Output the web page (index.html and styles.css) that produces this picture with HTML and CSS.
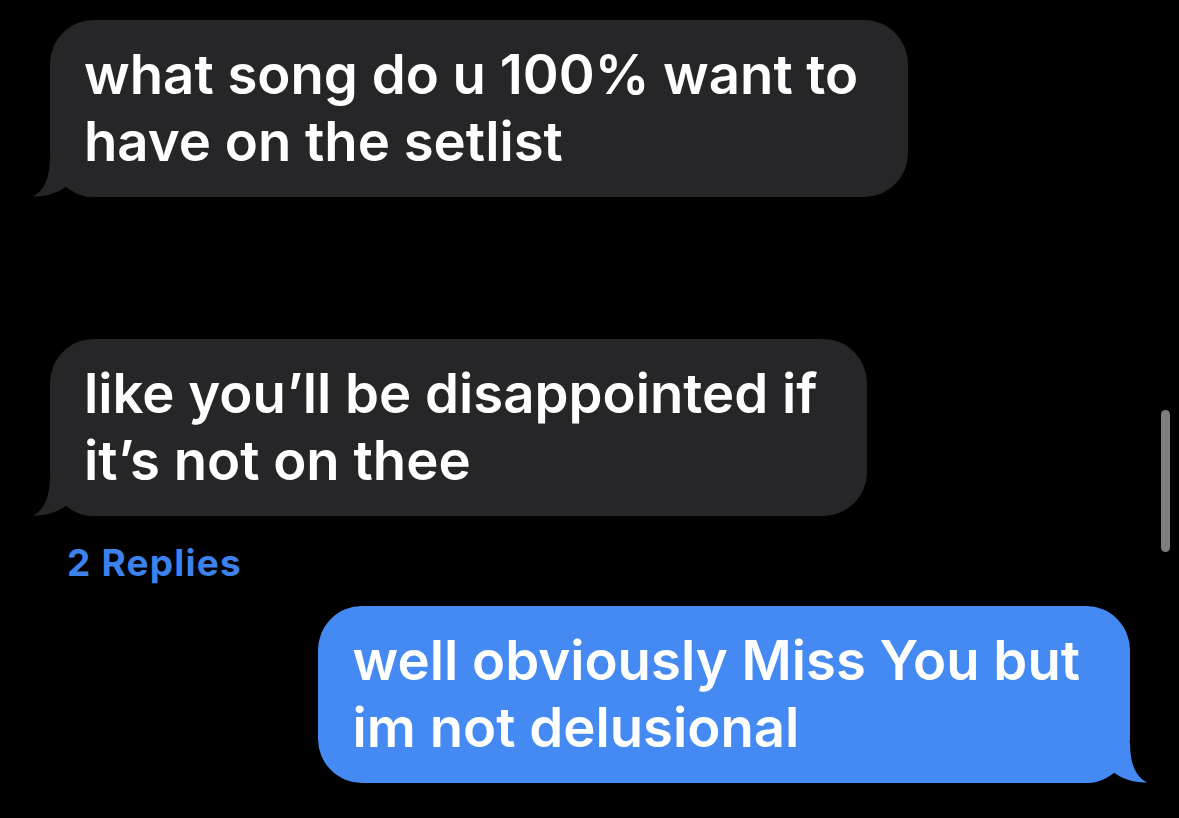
FILE: index.html
```html
<!DOCTYPE html>
<html lang="en">
<head>
<meta charset="utf-8">
<title>Messages</title>
<link rel="stylesheet" href="styles.css">
</head>
<body>
<main class="thread">
  <div class="msg msg-in msg-first">
    <div class="bubble bubble-in">what song do u 100% want to<br>have on the setlist
      <svg class="tail tail-in" viewBox="0 0 60 40" width="60" height="40" aria-hidden="true"><path d="M17 0 C17 20 12 33 0 39.5 C12 40 25 36 34 29 C41 35 48 40 60 40 L60 0 Z"/></svg>
    </div>
  </div>
  <div class="msg msg-in msg-second">
    <div class="bubble bubble-in">like you’ll be disappointed if<br>it’s not on thee
      <svg class="tail tail-in" viewBox="0 0 60 40" width="60" height="40" aria-hidden="true"><path d="M17 0 C17 20 12 33 0 39.5 C12 40 25 36 34 29 C41 35 48 40 60 40 L60 0 Z"/></svg>
    </div>
  </div>
  <div class="replies">2 Replies</div>
  <div class="msg msg-out">
    <div class="bubble bubble-out">well obviously Miss You but<br>im not delusional
      <svg class="tail tail-out" viewBox="0 0 60 40" width="60" height="40" aria-hidden="true"><path d="M43 0 C43 20 48 33 60 39.5 C48 40 35 36 26 29 C19 35 12 40 0 40 L0 0 Z"/></svg>
    </div>
  </div>
</main>
<div class="scrollbar"></div>
</body>
</html>
```
FILE: styles.css
```css
html, body {
  margin: 0;
  padding: 0;
  background: #000;
}
body {
  width: 1179px;
  height: 818px;
  overflow: hidden;
  position: relative;
  font-family: Inter, "Noto Sans", sans-serif;
}
.thread {
  display: flex;
  flex-direction: column;
  padding-top: 20px;
}
.msg {
  display: flex;
}
.msg-in {
  justify-content: flex-start;
  padding-left: 50px;
}
.msg-second {
  margin-top: 142px;
}
.msg-out {
  justify-content: flex-end;
  padding-right: 49px;
  margin-top: 23px;
}
.bubble {
  position: relative;
  z-index: 0;
  color: #fff;
  font-size: 54.5px;
  font-weight: 600;
  line-height: 67px;
  letter-spacing: 0;
  padding: 21px 50px 22px 34px;
  border-radius: 44px;
  white-space: nowrap;
}
.bubble-in {
  background: #262628;
}
.bubble-out {
  background: #448af2;
  padding-left: 35px;
}
.tail {
  position: absolute;
  bottom: 0;
  z-index: -1;
}
.tail-in {
  left: -17px;
  fill: #262628;
}
.tail-out {
  right: -17px;
  fill: #448af2;
}
.replies {
  margin: 27px 0 0 67px;
  color: #3d82ec;
  font-size: 37px;
  font-weight: 650;
  line-height: 40px;
  letter-spacing: 1.2px;
}
.scrollbar {
  position: absolute;
  left: 1161px;
  top: 410px;
  width: 9px;
  height: 142px;
  border-radius: 5px;
  background: #7e7e7e;
}
```
